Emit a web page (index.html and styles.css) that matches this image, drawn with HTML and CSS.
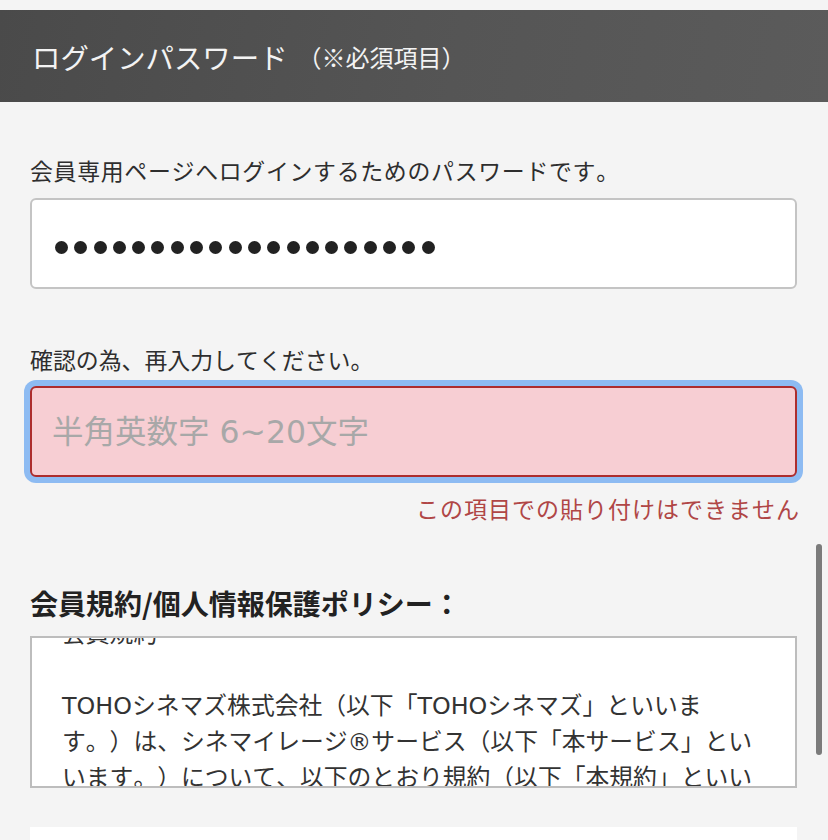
FILE: index.html
```html
<!DOCTYPE html>
<html lang="ja">
<head>
<meta charset="utf-8">
<title>ログインパスワード</title>
<link rel="stylesheet" href="styles.css">
</head>
<body>
<div class="page">
  <h2 class="section-head">ログインパスワード<span class="req">（※必須項目）</span></h2>
  <form class="form">
    <p class="label label-first">会員専用ページへログインするためのパスワードです。</p>
    <div class="field field-pass" aria-label="パスワード">
      <div class="dots"><i></i><i></i><i></i><i></i><i></i><i></i><i></i><i></i><i></i><i></i><i></i><i></i><i></i><i></i><i></i><i></i><i></i><i></i><i></i><i></i></div>
    </div>
    <p class="label label-second">確認の為、再入力してください。</p>
    <input class="field field-error" type="text" placeholder="半角英数字 6~20文字">
    <p class="error-msg">この項目での貼り付けはできません</p>
    <h3 class="terms-title">会員規約/個人情報保護ポリシー：</h3>
    <div class="terms">
      <div class="terms-inner">
        会員規約<br>
        <br>
        TOHOシネマズ株式会社（以下「TOHOシネマズ」といいま<br>
        す。）は、シネマイレージ®サービス（以下「本サービス」とい<br>
        います。）について、以下のとおり規約（以下「本規約」といい<br>
        ます。）を定めます。
      </div>
    </div>
    <div class="next-field"></div>
  </form>
</div>
<div class="scroll-thumb"></div>
</body>
</html>
```
FILE: styles.css
```css
html, body {
  margin: 0;
  padding: 0;
  background: #f4f4f4;
  height: 840px;
  overflow: hidden;
}
body {
  font-family: "Noto Sans CJK JP", "Noto Sans", sans-serif;
  color: #333;
  text-spacing-trim: space-all;
  font-kerning: none;
}
.page {
  padding-top: 10px;
}
.section-head {
  margin: 0;
  height: 92px;
  box-sizing: border-box;
  padding-left: 32px;
  display: flex;
  align-items: center;
  background: linear-gradient(100deg, #4a4a4a 0%, #555 55%, #5b5b5b 100%);
  color: #f3f3f3;
  font-size: 28.4px;
  font-weight: 400;
  line-height: 40px;
  padding-top: 2px;
}
.req {
  font-size: 24px;
  margin-left: 10px;
}
.form {
  padding: 0 31px 0 30px;
  display: flex;
  flex-direction: column;
}
.label {
  margin: 0;
  font-size: 22.9px;
  line-height: 32px;
  color: #2e2e2e;
}
.label-first {
  margin-top: 52px;
  margin-bottom: 12px;
  letter-spacing: 0.7px;
}
.label-second {
  margin-top: 54px;
  margin-bottom: 11px;
}
.field {
  box-sizing: border-box;
  height: 91px;
  width: 100%;
  border-radius: 6px;
  margin: 0;
}
.field-pass {
  background: #fff;
  border: 2px solid #c4c4c4;
  display: flex;
  align-items: center;
  padding: 7px 0 0 23px;
}
.dots {
  display: flex;
  gap: 6.3px;
}
.dots i {
  width: 13px;
  height: 13px;
  border-radius: 50%;
  background: #222;
}
.field-error {
  display: block;
  background: #f7ced3;
  border: 2px solid #ad2d2d;
  box-shadow: 0 0 0 6px #8dbbf2;
  outline: none;
  padding: 0 20px;
  font-family: "DejaVu Sans", "Noto Sans CJK JP", sans-serif;
  font-size: 31.5px;
  color: #333;
}
.field-error::placeholder {
  color: #a8a8a8;
}
.error-msg {
  margin: 15px -3px 0 0;
  text-align: right;
  font-size: 23px;
  letter-spacing: 1px;
  line-height: 32px;
  color: #b04646;
}
.terms-title {
  margin: 61px 0 0;
  font-size: 28px;
  line-height: 36px;
  font-weight: 700;
  color: #222;
}
.terms {
  margin-top: 15px;
  height: 152px;
  box-sizing: border-box;
  border: 2px solid #bdbdbd;
  background: #fff;
  overflow: hidden;
  padding: 0 30px;
}
.terms-inner {
  margin-top: -22px;
  font-family: "DejaVu Sans", "Noto Sans CJK JP", sans-serif;
  font-size: 23.8px;
  line-height: 36px;
  color: #333;
  white-space: nowrap;
}
.next-field {
  margin-top: 39px;
  height: 60px;
  background: #fff;
}
.scroll-thumb {
  position: fixed;
  left: 816px;
  top: 544px;
  width: 6px;
  height: 211px;
  border-radius: 3px;
  background: #7b7b7b;
}
```
